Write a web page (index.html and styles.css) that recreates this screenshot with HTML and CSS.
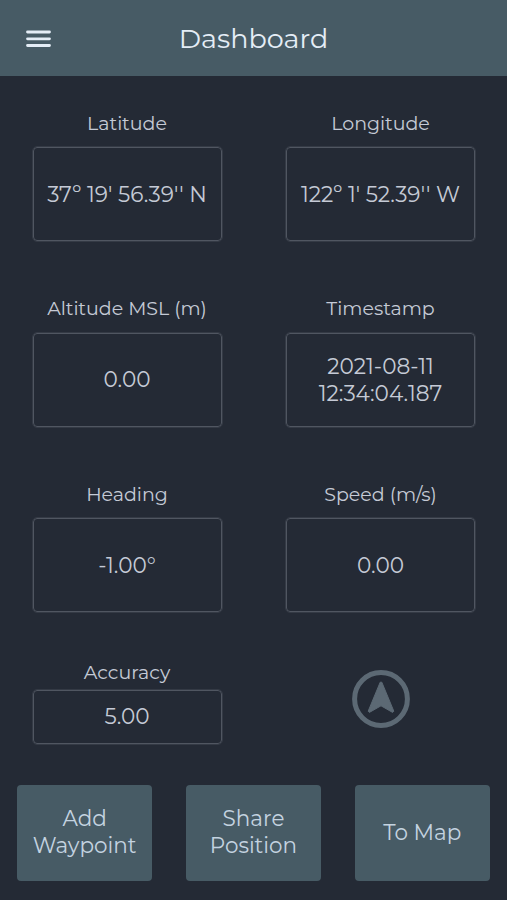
FILE: index.html
```html
<!DOCTYPE html>
<html lang="en">
<head>
<meta charset="utf-8">
<title>Dashboard</title>
<link rel="stylesheet" href="styles.css">
</head>
<body>
<header class="topbar">
  <button class="menu" aria-label="Menu"><svg width="26" height="18" viewBox="0 0 26 18"><path d="M2.5 2H24.5M2.5 8.8H24.5M2.5 15.5H24.5"/></svg></button>
  <h1 class="title">Dashboard</h1>
</header>
<main class="readings">
  <section class="field"><h2 class="label">Latitude</h2><div class="value"><span>37º 19' 56.39'' N</span></div></section>
  <section class="field"><h2 class="label">Longitude</h2><div class="value"><span>122º 1' 52.39'' W</span></div></section>
  <section class="field"><h2 class="label">Altitude MSL (m)</h2><div class="value"><span>0.00</span></div></section>
  <section class="field"><h2 class="label">Timestamp</h2><div class="value"><span>2021-08-11</span><span>12:34:04.187</span></div></section>
  <section class="field"><h2 class="label">Heading</h2><div class="value"><span>-1.00°</span></div></section>
  <section class="field"><h2 class="label">Speed (m/s)</h2><div class="value"><span>0.00</span></div></section>
  <section class="field compact"><h2 class="label">Accuracy</h2><div class="value"><span>5.00</span></div></section>
  <div class="compass"><svg width="60" height="60" viewBox="0 0 60 60"><circle cx="30" cy="30" r="26.4"/><path d="M29.2 13.2H30.8L42.8 42.2L41.6 43.4L30 36.8L18.4 43.4L17.2 42.2Z"/></svg></div>
</main>
<nav class="actions">
  <button class="action"><span>Add</span><span>Waypoint</span></button>
  <button class="action"><span>Share</span><span>Position</span></button>
  <button class="action"><span>To Map</span></button>
</nav>
</body>
</html>
```
FILE: styles.css
```css
* { box-sizing: border-box; }
body {
  margin: 0;
  height: 900px;
  overflow: hidden;
  background: #242a35;
  color: #c5cad6;
  font-family: Montserrat, Inter, "Open Sans", sans-serif;
  font-weight: 430;
}
h1, h2 { margin: 0; font-weight: inherit; }
button { border: 0; padding: 0; font: inherit; color: inherit; }
.topbar {
  display: grid;
  grid-template-columns: 76px 1fr 76px;
  align-items: center;
  height: 76px;
  background: #475b65;
}
.menu { display: flex; padding: 2px 0 0 25px; background: none; }
.menu svg { fill: none; stroke: #e4edf6; stroke-width: 2.8; stroke-linecap: round; }
.title {
  padding-top: 2px;
  text-align: center;
  color: #e4edf6;
  font-size: 27px;
  line-height: 34px;
}
.readings {
  display: grid;
  grid-template-columns: 254px 253px;
  grid-template-rows: 185.5px 185.5px 185.5px 113px;
  height: 709px;
  padding-top: 34.5px;
}
.field { display: flex; flex-direction: column; align-items: center; }
.label { font-size: 19px; line-height: 26px; white-space: nowrap; }
.value {
  display: flex;
  flex-direction: column;
  align-items: center;
  justify-content: center;
  width: 189px;
  height: 94px;
  margin-top: 10.5px;
  border: 1.5px solid #505661;
  outline: .5px solid #343a45;
  border-radius: 4px;
  font-size: 21.6px;
  line-height: 27px;
  white-space: nowrap;
}
.compact .label { margin-top: -7px; }
.compact .value { height: 54px; margin-top: 4px; padding-bottom: 1px; }
.compass { display: flex; justify-content: center; align-items: flex-start; padding-top: 1.5px; }
.compass svg { fill: #5c6974; stroke: #5c6974; stroke-linejoin: round; }
.compass circle { fill: none; stroke-width: 5; }
.actions {
  display: grid;
  grid-template-columns: repeat(3, 135.5px);
  justify-content: center;
  gap: 33.3px;
}
.action {
  display: flex;
  flex-direction: column;
  align-items: center;
  justify-content: center;
  height: 96px;
  padding-bottom: 2px;
  border-radius: 4px;
  background: #475b65;
  color: #c4d3e0;
  font-size: 21.5px;
  line-height: 27px;
}
```
